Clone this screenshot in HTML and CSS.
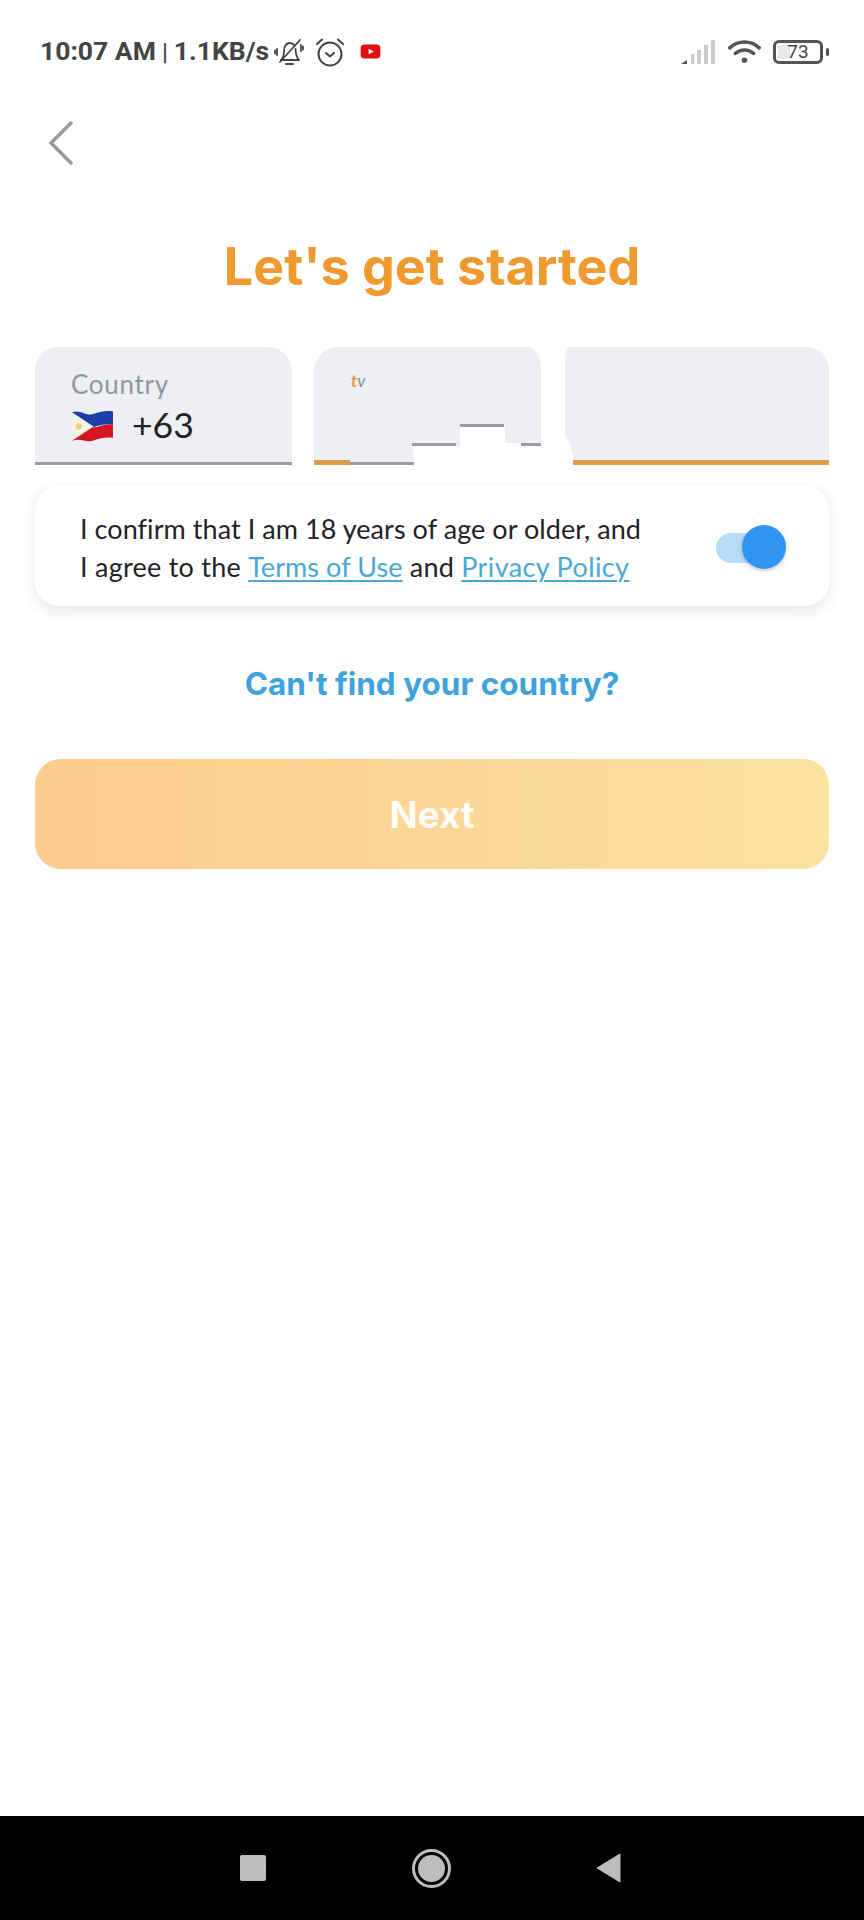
FILE: index.html
```html
<!DOCTYPE html>
<html lang="en">
<head>
<meta charset="utf-8">
<title>Let's get started</title>
<link rel="stylesheet" href="styles.css">
</head>
<body>
<div class="screen">
  <header class="status">
    <div class="status-left">
      <span class="status-time">10:07 AM</span><span class="status-sep">|</span><span class="status-time">1.1KB/s</span>
      <svg class="ic-bell" viewBox="0 0 30 30" fill="none" stroke="#444" stroke-width="1.800" stroke-linecap="round" stroke-linejoin="round">
        <path d="M7 23c2-2 3-5 3-9 0-5 2.500-8 6-8 2 0 3.500 1 4.500 2.500"/>
        <path d="M21.500 12c.2 5 1.500 9 3.500 11H7"/>
        <path d="M12 27h7"/>
        <path d="M6 25L26 3"/>
        <path d="M3 12v6M1 13.500v3M27 8v6M29 9.500v3"/>
      </svg>
      <svg class="ic-alarm" viewBox="0 0 30 30" fill="none" stroke="#444" stroke-width="2" stroke-linecap="round" stroke-linejoin="round">
        <circle cx="15" cy="17" r="11.500"/>
        <path d="M11 16l4 3.500 4-3.500"/>
        <path d="M2 7l5-4.500M28 7l-5-4.500"/>
      </svg>
      <svg class="ic-yt" viewBox="0 0 22 16">
        <rect x="0.500" y="0.500" width="21" height="15" rx="4" fill="#e01010"/>
        <path d="M9 5l5.500 3L9 11z" fill="#fff"/>
      </svg>
    </div>
    <div class="status-right">
      <svg class="ic-signal" viewBox="0 0 36 26">
        <path d="M1 25l6-4v4z" fill="#555"/>
        <rect x="11" y="15" width="3.500" height="10" fill="#ccc"/>
        <rect x="17" y="11" width="4" height="14" fill="#ccc"/>
        <rect x="24" y="6" width="4" height="19" fill="#ccc"/>
        <rect x="31" y="1" width="4" height="24" fill="#ccc"/>
      </svg>
      <svg class="ic-wifi" viewBox="0 0 36 26" fill="none" stroke="#555" stroke-width="3.800" stroke-linecap="round">
        <path d="M2 8.500C11 0 25 0 34 8.500"/>
        <path d="M8 14.500c6-5 14-5 20 0"/>
        <circle cx="18" cy="22" r="3" fill="#555" stroke="none"/>
      </svg>
      <div class="battery">
        <div class="battery-body"><span class="battery-fill"></span><span class="battery-num">73</span></div>
        <span class="battery-cap"></span>
      </div>
    </div>
  </header>

  <main class="content">
    <button class="back" aria-label="Back">
      <svg viewBox="0 0 26 46" fill="none" stroke="#999" stroke-width="3.400"><path d="M24 2L3 23l21 21"/></svg>
    </button>
    <h1 class="title">Let's get started</h1>

    <div class="fields">
      <div class="field field-country">
        <span class="field-label">Country</span>
        <div class="field-value">
          <svg class="flag" viewBox="0 0 42 32">
            <path d="M1 3c8-3 14 4 20 2s12-4 20-3v13c-8-1-14 1-20 3S9 15 1 16z" fill="#1c3fa8"/>
            <path d="M1 16c8-1 14 2 20 2s12-4 20-3v13c-8-1-14 1-20 3S9 28 1 31z" fill="#d4141f"/>
            <path d="M1 3l21 14L1 31z" fill="#f6f2e6"/>
            <circle cx="7.500" cy="17" r="3" fill="#f0cf6a"/>
          </svg>
          <span class="dial">+63</span>
        </div>
      </div>
      <div class="field field-phone">
        <span class="phone-mark"><span class="mark-o">t</span><span class="mark-g">v</span></span>
        <svg class="redact" viewBox="0 0 515 145" aria-hidden="true">
          <rect x="36" y="113" width="66" height="2" fill="#eeeff2"/>
          <rect x="36" y="115" width="66" height="3" fill="#9a9ba3"/>
          <path d="M216 -1h38l-2 6-1 9V90l5 6 3 13v17H104l-4-8-1-19h47V79h45v17h36V18l-2-9-4-5-5-4z" fill="#fff"/>
          <rect x="146" y="77" width="44" height="3" fill="#9a9ba3"/>
          <rect x="98" y="96" width="44" height="3" fill="#9a9ba3"/>
          <rect x="207" y="96" width="20" height="3" fill="#9a9ba3"/>
        </svg>
      </div>
    </div>

    <div class="card">
      <p class="consent">I confirm that I am 18 years of age or older, and<br><span class="consent-line">I agree to the <a class="link-terms" href="#">Terms of Use</a> and <a class="link-privacy" href="#">Privacy Policy</a></span></p>
      <div class="toggle"><span class="toggle-track"></span><span class="toggle-thumb"></span></div>
    </div>

    <a class="help" href="#">Can't find your country?</a>
    <button class="next">Next</button>
  </main>

  <nav class="navbar">
    <span class="nav-square"></span>
    <span class="nav-home"><span class="nav-dot"></span></span>
    <svg class="nav-back" viewBox="0 0 25 30"><path d="M1 15L24 1v28z" fill="#bdbdbd" stroke="#bdbdbd" stroke-linejoin="round"/></svg>
  </nav>
</div>
</body>
</html>
```
FILE: styles.css
```css
* { box-sizing: border-box; }
html, body { margin: 0; padding: 0; background: #fff; }
.screen {
  width: 864px;
  height: 1920px;
  display: flex;
  flex-direction: column;
  font-family: "Lato", "Liberation Sans", sans-serif;
  color: #1f2226;
  overflow: hidden;
}

/* status bar */
.status {
  height: 100px;
  flex: none;
  padding: 3px 35px 0 40px;
  display: flex;
  justify-content: space-between;
  align-items: center;
}
.status-left, .status-right { display: flex; align-items: center; }
.status-time { font: 700 26.500px/1 "Roboto", sans-serif; color: #444; }
.status-sep { font: 500 24px/1 "Roboto", sans-serif; color: #444; margin: 0 6px; }
.ic-bell { width: 30px; height: 30px; margin-left: 5px; }
.ic-alarm { width: 30px; height: 30px; margin-left: 11px; }
.ic-yt { width: 21px; height: 15px; margin-left: 15px; }
.ic-signal { width: 36px; height: 26px; }
.ic-wifi { width: 33px; height: 24px; margin-left: 12px; }
.battery { display: flex; align-items: center; margin-left: 12px; gap: 3px; }
.battery-body {
  position: relative;
  width: 50px;
  height: 24px;
  border: 3px solid #555;
  border-radius: 6px;
  display: flex;
  align-items: center;
  justify-content: center;
}
.battery-fill { position: absolute; left: 2px; top: 2px; bottom: 2px; width: 12px; background: #e8e8e8; }
.battery-num { position: relative; font: 400 19px/1 "Roboto", sans-serif; color: #444; }
.battery-cap { width: 3px; height: 8px; background: #555; border-radius: 2px; }

/* content */
.content { flex: 1; padding: 0 35px; display: flex; flex-direction: column; }
.back {
  width: 26px;
  height: 46px;
  margin: 20px 0 0 13px;
  padding: 0;
  border: 0;
  background: none;
}
.back svg { display: block; width: 26px; height: 46px; }
.title {
  margin: 69px 0 0;
  font-family: "Inter", sans-serif;
  font-size: 52px;
  line-height: 64px;
  font-weight: 700;
  text-align: center;
  color: #ee9a2e;
}
.fields { display: flex; gap: 22px; margin-top: 48px; }
.field {
  position: relative;
  height: 118px;
  background: #eeeff2;
  border-radius: 24px 24px 0 0;
}
.field-country { width: 257px; padding: 22px 0 0 36px; border-bottom: 3px solid #9a9ba3; }
.field-label { display: block; font-size: 26px; line-height: 30px; color: #92969e; letter-spacing: .7px; }
.field-value { display: flex; align-items: center; gap: 18px; margin-top: 6px; }
.flag { width: 43px; height: 33px; flex: none; }
.dial { font-size: 35.500px; line-height: 40px; color: #1f2226; }
.field-phone { flex: 1; }
.field-phone::after { content: ""; position: absolute; left: 0; right: 0; bottom: 0; height: 5px; background: #dc9c48; }
.phone-mark { position: absolute; left: 37px; top: 24px; font-size: 17px; line-height: 20px; font-style: italic; }
.mark-o { color: #e89a3a; font-weight: 700; }
.mark-g { color: #8a8d94; }

/* painted-out area on the phone field */
.redact { position: absolute; left: 0; top: 0; width: 515px; height: 145px; z-index: 1; }

/* consent */
.card {
  margin-top: 21px;
  height: 120px;
  background: #fff;
  border-radius: 24px;
  box-shadow: 0 5px 16px rgba(30, 40, 60, .11);
  padding: 3px 43px 0 45px;
  display: flex;
  align-items: center;
  justify-content: space-between;
  position: relative;
}
.consent { margin: 0; font-size: 27px; line-height: 38px; letter-spacing: .06px; color: #1f2226; }
.consent-line { letter-spacing: .25px; }
.consent a { color: #4aa8cf; text-decoration: underline; text-underline-offset: 3px; text-decoration-thickness: 1.500px; }
.consent .link-terms { letter-spacing: .07px; }
.consent .link-privacy { letter-spacing: .37px; }
.toggle { position: relative; width: 70px; height: 44px; flex: none; top: -1px; }
.toggle-track { position: absolute; left: 0; right: 8px; top: 8px; height: 30px; border-radius: 15px; background: #b6dcf8; }
.toggle-thumb { position: absolute; right: 0; top: 0; width: 44px; height: 44px; border-radius: 50%; background: #2f97f3; box-shadow: 0 2px 4px rgba(0, 0, 0, .2); }

.help {
  margin-top: 58px;
  font-family: "Inter", sans-serif;
  font-size: 31.500px;
  line-height: 40px;
  font-weight: 700;
  text-align: center;
  color: #3ea3dd;
  text-decoration: none;
}
.next {
  margin-top: 55px;
  height: 110px;
  border: 0;
  border-radius: 26px;
  background: linear-gradient(90deg, #fccb8e, #fbe29f);
  color: #fffdf5;
  font: 700 37px/1 "Inter", sans-serif;
}

/* navigation bar */
.navbar {
  height: 104px;
  flex: none;
  background: #000;
  position: relative;
}
.nav-square { position: absolute; left: 240px; top: 39px; width: 26px; height: 26px; border-radius: 2px; background: #bdbdbd; }
.nav-home { position: absolute; left: 412px; top: 33px; width: 39px; height: 39px; border: 3px solid #bdbdbd; border-radius: 50%; display: flex; align-items: center; justify-content: center; }
.nav-dot { width: 27px; height: 27px; border-radius: 50%; background: #bdbdbd; }
.nav-back { position: absolute; left: 596px; top: 37px; width: 25px; height: 30px; }
```
